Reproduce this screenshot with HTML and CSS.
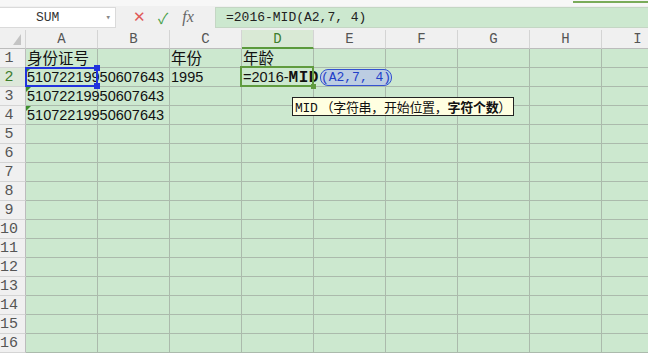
FILE: index.html
```html
<!DOCTYPE html>
<html lang="zh-CN">
<head>
  <meta charset="UTF-8">
  <title>MID 函数</title>
  <link rel="stylesheet" href="styles.css">
</head>
<body>

<div class="app">
  <div class="topstrip"><span class="tabline"></span></div>

  <div class="fbar">
    <div class="namebox"><span>SUM</span><span class="caret">▾</span></div>
    <div class="fbtns">
      <span class="btn-x">✕</span>
      <span class="btn-ok">✓</span>
      <span class="btn-fx">fx</span>
    </div>
    <div class="finput">=2016-MID(A2,7, 4)</div>
  </div>

  <div class="sheet">
    <div class="grid">
      <div class="hd corner"></div><div class="hd">A</div><div class="hd">B</div><div class="hd">C</div><div class="hd cur">D</div><div class="hd">E</div><div class="hd">F</div><div class="hd">G</div><div class="hd">H</div><div class="hd">I</div>

      <div class="rh">1</div><div class="cjk">身份证号</div><div></div><div class="cjk">年份</div><div class="cjk">年龄</div><div></div><div></div><div></div><div></div><div></div>

      <div class="rh cur">2</div><div class="txt sel">51072219950607643<span class="hnd hnd-t"></span><span class="hnd hnd-b"></span></div><div></div><div>1995</div><div class="active">=2016-<b class="fn">MID</b><span class="arg">(A2,7, 4)</span></div><div></div><div></div><div></div><div></div><div></div>

      <div class="rh">3</div><div class="txt">51072219950607643</div><div></div><div></div><div></div><div></div><div></div><div></div><div></div><div></div>

      <div class="rh">4</div><div class="txt">51072219950607643</div><div></div><div></div><div></div><div></div><div></div><div></div><div></div><div></div>

      <div class="rh">5</div><div></div><div></div><div></div><div></div><div></div><div></div><div></div><div></div><div></div>
      <div class="rh">6</div><div></div><div></div><div></div><div></div><div></div><div></div><div></div><div></div><div></div>
      <div class="rh">7</div><div></div><div></div><div></div><div></div><div></div><div></div><div></div><div></div><div></div>
      <div class="rh">8</div><div></div><div></div><div></div><div></div><div></div><div></div><div></div><div></div><div></div>
      <div class="rh">9</div><div></div><div></div><div></div><div></div><div></div><div></div><div></div><div></div><div></div>
      <div class="rh">10</div><div></div><div></div><div></div><div></div><div></div><div></div><div></div><div></div><div></div>
      <div class="rh">11</div><div></div><div></div><div></div><div></div><div></div><div></div><div></div><div></div><div></div>
      <div class="rh">12</div><div></div><div></div><div></div><div></div><div></div><div></div><div></div><div></div><div></div>
      <div class="rh">13</div><div></div><div></div><div></div><div></div><div></div><div></div><div></div><div></div><div></div>
      <div class="rh">14</div><div></div><div></div><div></div><div></div><div></div><div></div><div></div><div></div><div></div>
      <div class="rh">15</div><div></div><div></div><div></div><div></div><div></div><div></div><div></div><div></div><div></div>
      <div class="rh">16</div><div></div><div></div><div></div><div></div><div></div><div></div><div></div><div></div><div></div>
    </div>

    <!-- подсказка по аргументам функции -->
    <div class="tip"><span class="tip-fn">MID</span>（字符串，开始位置，<b>字符个数</b>）</div>
  </div>
</div>

</body>
</html>
```

FILE: styles.css
```css
body {
  margin: 0;
  font-family: "Liberation Sans", "Noto Sans CJK SC", sans-serif;
  background: #fff;
  overflow: hidden;
}

.app {
  width: 648px;
  height: 353px;
  overflow: hidden;
}

.topstrip {
  height: 6px;
  background: #f7f7f7;
  display: flex;
  justify-content: flex-end;
}

.tabline {
  width: 75px;
  height: 2px;
  margin-top: 1px;
  background: #7aab5a;
}

/* строка формул */
.fbar {
  height: 24px;
  display: flex;
  align-items: flex-start;
  background: #f0f0f0;
}

.namebox {
  width: 116px;
  height: 21px;
  margin-top: 1px;
  box-sizing: border-box;
  background: #fff;
  border: 1px solid #dadada;
  border-left: none;
  display: flex;
  align-items: center;
  padding-left: 36px;
  font: 13px "Liberation Mono", monospace;
  color: #333;
}

.caret {
  margin-left: auto;
  margin-right: 4px;
  font-size: 9px;
  color: #888;
}

.fbtns {
  width: 99px;
  height: 22px;
  display: flex;
  align-items: center;
  padding-left: 17px;
  box-sizing: border-box;
  gap: 12px;
}

.btn-x {
  color: #e05a5a;
  font-size: 15px;
}

.btn-ok {
  color: #47a04a;
  font-size: 15px;
}

.btn-fx {
  color: #666;
  margin-left: 2px;
  font: italic 16px "Liberation Serif", serif;
}

.finput {
  flex: 1;
  height: 21px;
  margin-top: 1px;
  box-sizing: border-box;
  background: #cce8cf;
  border: 1px solid #c4d6c4;
  border-right: none;
  padding-left: 10px;
  font: 13px "Liberation Mono", monospace;
  line-height: 19px;
  color: #222;
}

/* лист */
.sheet {
  position: relative;
}

.grid {
  display: grid;
  grid-template-columns: 26px repeat(9, 72px);
  grid-auto-rows: 19px;
  background: #cce8cf;
}

.grid > div {
  box-sizing: border-box;
  border-right: 1px solid #abbaac;
  border-bottom: 1px solid #abbaac;
  white-space: nowrap;
  padding-left: 1px;
  font-size: 14.5px;
  line-height: 19px;
  color: #111;
}

.grid > .hd,
.grid > .rh {
  background: #f0f0f0;
  border-color: #d4d4d4;
  color: #555;
  font: 14px "Liberation Mono", monospace;
  line-height: 19px;
  text-align: center;
  padding: 0;
}

.grid > .rh {
  font-size: 15px;
  text-align: center;
  padding-right: 7px;
  border-right-color: #bcbcbc;
}

.grid > .hd {
  border-bottom-color: #bcbcbc;
}

.grid > .hd.cur {
  background: #d9e9d5;
  color: #3d7d2c;
  border-bottom: 2px solid #5b9a3c;
}

.grid > .rh.cur {
  background: #dde8da;
  color: #3d7d2c;
}

.corner {
  display: flex;
  justify-content: flex-end;
  align-items: flex-end;
}

.corner::after {
  content: "";
  width: 0;
  height: 0;
  margin: 0 4px 3px 0;
  border-left: 8px solid transparent;
  border-bottom: 11px solid #c4c4c4;
}

.grid > .cjk {
  font-size: 15.5px;
}

.txt {
  position: relative;
}

.txt::before {
  content: "";
  position: absolute;
  left: 0;
  top: 0;
  border-top: 5px solid #3d8f2d;
  border-right: 5px solid transparent;
}

.sel::after {
  content: "";
  position: absolute;
  left: -1px;
  top: -1px;
  right: -1px;
  bottom: -1px;
  border: 2px solid #2233dd;
}

.hnd {
  position: absolute;
  right: -3px;
  width: 6px;
  height: 6px;
  background: #2233dd;
  z-index: 1;
}

.hnd-t {
  top: -3px;
}

.hnd-b {
  bottom: -3px;
}

.active {
  position: relative;
}

.active::after {
  content: "";
  position: absolute;
  left: -2px;
  top: -2px;
  right: -1px;
  bottom: -1px;
  border: 2px solid #609b3f;
  pointer-events: none;
}

.active::before {
  content: "";
  position: absolute;
  right: -3px;
  bottom: -3px;
  width: 5px;
  height: 5px;
  background: #609b3f;
  z-index: 1;
}

.fn {
  font: bold 16px "Liberation Mono", monospace;
  letter-spacing: 0.5px;
}

.arg {
  display: inline-block;
  margin-left: 1px;
  padding: 0;
  height: 15px;
  line-height: 14px;
  border: 1.5px solid #3552d0;
  border-radius: 8px;
  background: #bccde2;
  color: #2340c8;
  font: 13px "Liberation Mono", monospace;
  vertical-align: 1px;
}

.tip {
  position: absolute;
  left: 292px;
  top: 67px;
  height: 19px;
  box-sizing: border-box;
  padding: 0 2px;
  background: #ffffe1;
  border: 1px solid #222;
  font: 13px "Noto Sans CJK SC", sans-serif;
  line-height: 17px;
  color: #111;
  white-space: nowrap;
  letter-spacing: -0.3px;
}

.tip-fn {
  font-family: "Liberation Mono", monospace;
  margin-right: 3px;
}
```
